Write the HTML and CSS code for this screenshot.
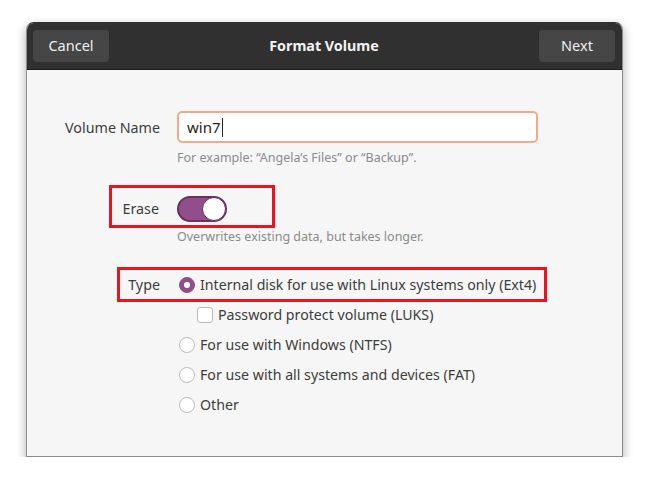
FILE: index.html
```html
<!DOCTYPE html>
<html>
<head>
<meta charset="utf-8">
<link rel="stylesheet" href="styles.css">
</head>
<body>
<div class="window">
  <div class="header">
    <button class="hbtn">Cancel</button>
    <div class="title">Format Volume</div>
    <button class="hbtn">Next</button>
  </div>
  <div class="content">
    <div class="form">
      <div class="label">Volume Name</div>
      <div class="entry"><span class="entry-text">win7</span><span class="caret"></span></div>

      <div></div>
      <div class="hint hint1">For example: “Angela’s Files” or “Backup”.</div>

      <div class="label erase-label">Erase</div>
      <div class="erase-cell"><div class="switch"><div class="knob"></div></div></div>

      <div></div>
      <div class="hint hint2">Overwrites existing data, but takes longer.</div>

      <div class="label type-label">Type</div>
      <div class="options">
        <div class="opt"><span class="radio checked"></span><span>Internal disk for use with Linux systems only (Ext4)</span></div>
        <div class="opt sub"><span class="check"></span><span>Password protect volume (LUKS)</span></div>
        <div class="opt"><span class="radio"></span><span>For use with Windows (NTFS)</span></div>
        <div class="opt"><span class="radio"></span><span>For use with all systems and devices (FAT)</span></div>
        <div class="opt"><span class="radio"></span><span>Other</span></div>
      </div>
    </div>
    <div class="mark mark-erase"></div>
    <div class="mark mark-type"></div>
  </div>
</div>
</body>
</html>
```

FILE: styles.css
```css
html, body {
  margin: 0;
  padding: 0;
  background: #ffffff;
}
body {
  font-family: "Noto Sans", "Open Sans", sans-serif;
  font-size: 14px;
  color: #3d3d3d;
}
.window {
  margin: 22px 0 0 26px;
  width: 595px;
  height: 433px;
  border: 1px solid #8c8c8c;
  border-top-color: #303030;
  border-radius: 8px 8px 0 0;
  background: #f6f6f6;
  box-shadow: 0 4px 10px 1px rgba(0,0,0,0.28);
  display: flex;
  flex-direction: column;
  overflow: hidden;
}
.header {
  height: 46px;
  background: #303030;
  border-bottom: 1px solid #1f1f1f;
  display: flex;
  align-items: center;
  justify-content: space-between;
  padding: 0 7px 0 6px;
}
.hbtn {
  width: 76px;
  height: 32px;
  border: none;
  border-radius: 4px;
  background: #464646;
  color: #eeeeee;
  font-family: inherit;
  font-size: 14.5px;
  padding: 0 0 2px 0;
  margin-top: 0;
}
.title {
  color: #f2f2f2;
  font-weight: bold;
  font-size: 14.3px;
  margin-bottom: 1px;
}
.content {
  position: relative;
  flex: 1;
}
.form {
  display: grid;
  grid-template-columns: 134px 1fr;
  column-gap: 16px;
  padding-top: 41px;
  align-items: center;
}
.label {
  text-align: right;
  font-size: 14.3px;
  padding-right: 1px;
}
.entry {
  height: 28px;
  border: 2px solid #f3a98c;
  border-radius: 5px;
  background: #ffffff;
  display: flex;
  align-items: center;
  padding-left: 8px;
  box-sizing: content-box;
  width: 349px;
}
.entry-text {
  font-size: 15px;
  color: #242424;
  margin-top: -1px;
}
.caret {
  display: inline-block;
  width: 1px;
  height: 19px;
  background: #242424;
  margin-left: 1px;
}
.hint {
  color: #8b8b8b;
  font-size: 12.5px;
  line-height: 18px;
}
.hint1 { margin-top: 6px; }
.erase-cell { margin-top: 29px; }
.erase-label { margin-top: 28px; padding-right: 2px; }
.switch {
  width: 46px;
  height: 22px;
  border: 2px solid #6b2f64;
  border-radius: 13px;
  background: #924d8b;
  display: flex;
  justify-content: flex-end;
  align-items: center;
}
.knob {
  width: 24px;
  height: 24px;
  border-radius: 50%;
  background: #ffffff;
  border: 1px solid #5a2a54;
  box-sizing: border-box;
  margin-right: -1px;
}
.hint2 { margin-top: 6px; }
.type-label { align-self: start; margin-top: 23px; line-height: 31px; padding-right: 1px; }
.options {
  margin-top: 23px;
  display: flex;
  flex-direction: column;
  margin-left: 2px;
}
.opt {
  height: 30px;
  display: flex;
  align-items: center;
  gap: 5px;
  font-size: 14.2px;
  padding-top: 1px;
  box-sizing: border-box;
}
.opt.sub { margin-left: 18px; gap: 5px; }
.radio {
  width: 14px;
  height: 14px;
  border-radius: 50%;
  border: 1px solid #bdbab6;
  background: #ffffff;
  flex: none;
  position: relative;
  margin-top: 1px;
}
.radio.checked {
  background: #924d8b;
  border-color: #924d8b;
}
.radio.checked::after {
  content: "";
  position: absolute;
  left: 4px;
  top: 4px;
  width: 6px;
  height: 6px;
  border-radius: 50%;
  background: #ffffff;
}
.check {
  width: 14px;
  height: 14px;
  border-radius: 3px;
  border: 1px solid #bdbab6;
  background: #ffffff;
  flex: none;
  margin-top: 1px;
}
.mark {
  position: absolute;
  border: 3px solid #e8141f;
}
.mark-erase {
  left: 82px;
  top: 115px;
  width: 160px;
  height: 37px;
}
.mark-type {
  left: 90px;
  top: 197px;
  width: 424px;
  height: 29px;
}
```
